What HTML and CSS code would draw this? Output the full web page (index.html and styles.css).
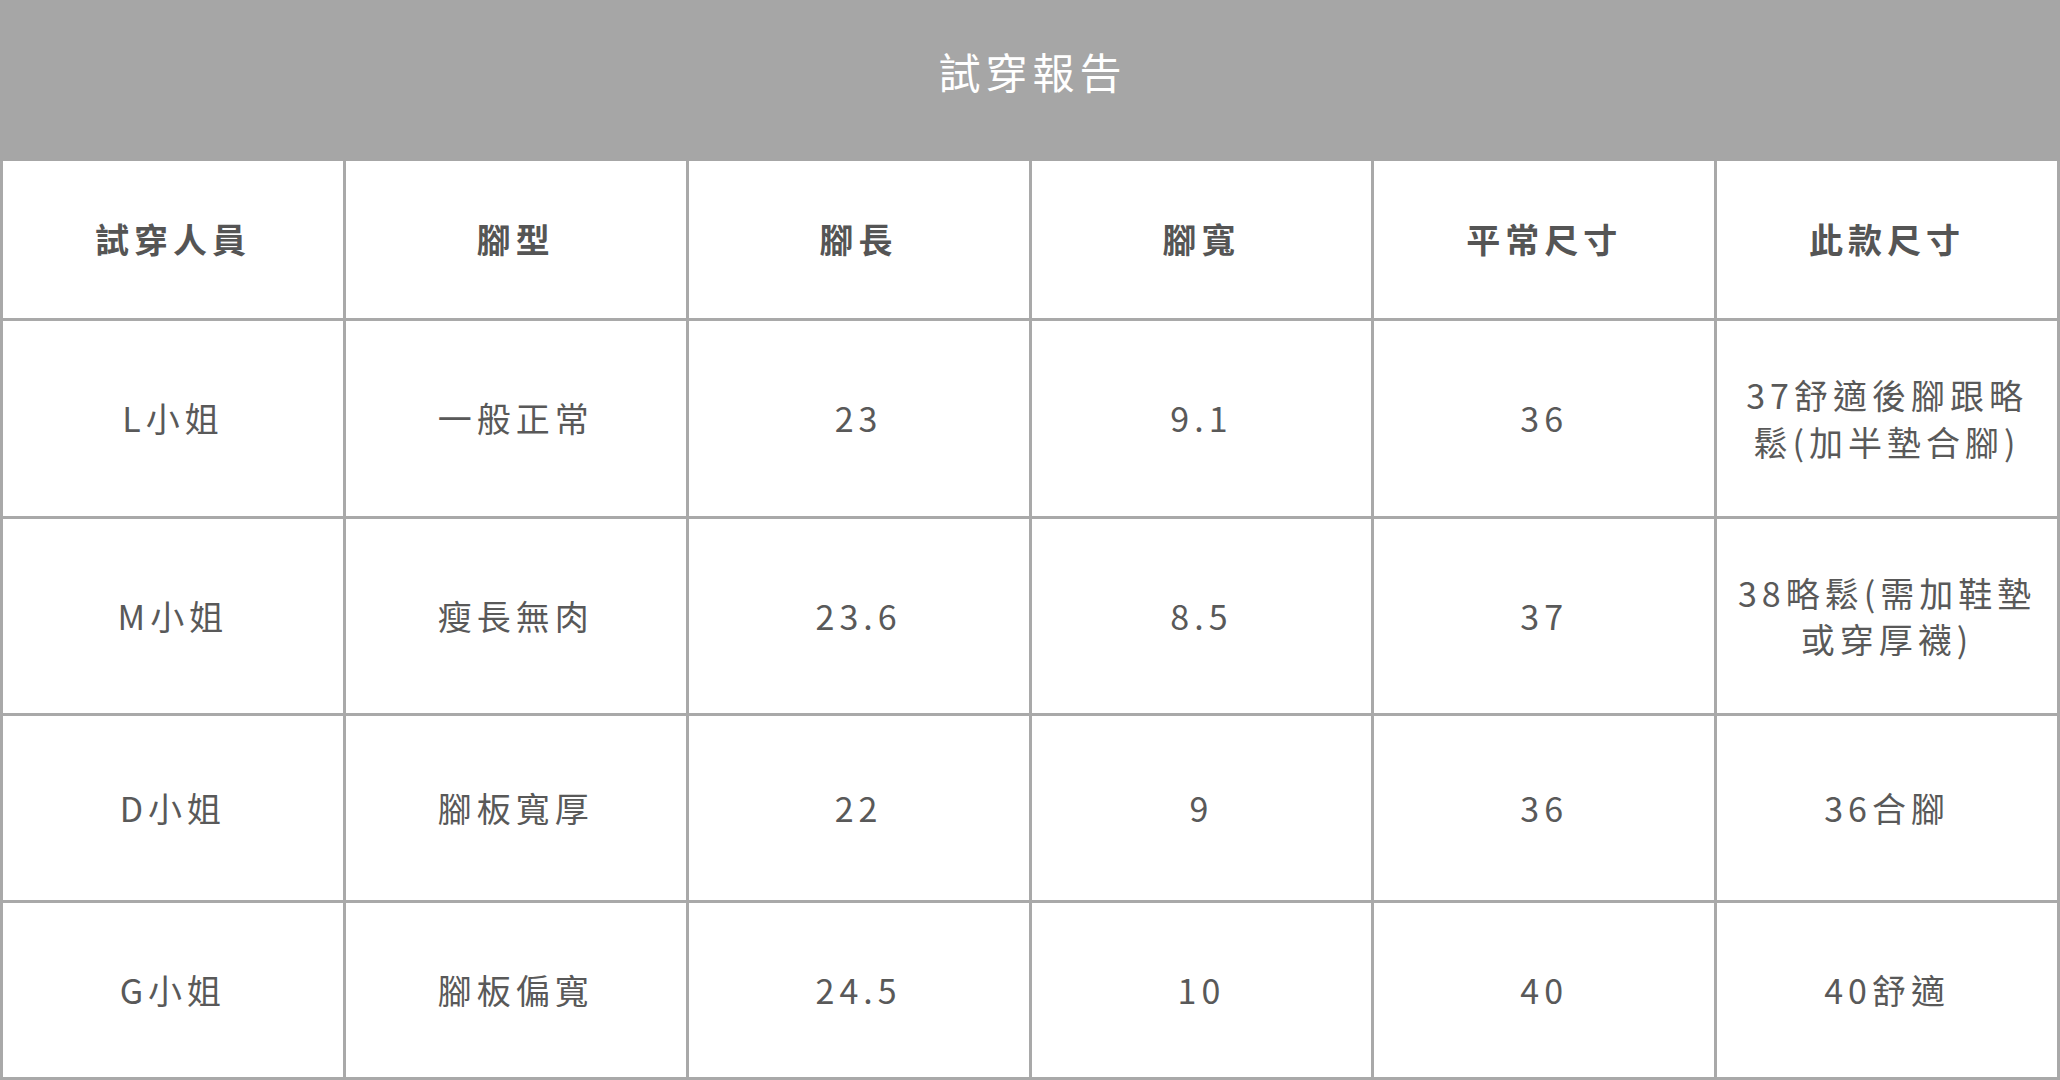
FILE: index.html
```html
<!DOCTYPE html>
<html lang="zh-Hant">
<head>
<meta charset="utf-8">
<title>試穿報告</title>
<link rel="stylesheet" href="styles.css">
</head>
<body>
<main class="report">
  <header class="report-title">試穿報告</header>
  <div class="report-grid">
    <div class="cell head">試穿人員</div>
    <div class="cell head">腳型</div>
    <div class="cell head">腳長</div>
    <div class="cell head">腳寬</div>
    <div class="cell head">平常尺寸</div>
    <div class="cell head">此款尺寸</div>

    <div class="cell">L小姐</div>
    <div class="cell">一般正常</div>
    <div class="cell">23</div>
    <div class="cell">9.1</div>
    <div class="cell">36</div>
    <div class="cell">37舒適後腳跟略鬆(加半墊合腳)</div>

    <div class="cell">M小姐</div>
    <div class="cell">瘦長無肉</div>
    <div class="cell">23.6</div>
    <div class="cell">8.5</div>
    <div class="cell">37</div>
    <div class="cell">38略鬆(需加鞋墊或穿厚襪)</div>

    <div class="cell">D小姐</div>
    <div class="cell">腳板寬厚</div>
    <div class="cell">22</div>
    <div class="cell">9</div>
    <div class="cell">36</div>
    <div class="cell">36合腳</div>

    <div class="cell">G小姐</div>
    <div class="cell">腳板偏寬</div>
    <div class="cell">24.5</div>
    <div class="cell">10</div>
    <div class="cell">40</div>
    <div class="cell">40舒適</div>
  </div>
</main>
</body>
</html>
```

FILE: styles.css
```css
html, body {
  margin: 0;
  padding: 0;
  background: #ffffff;
}

body {
  font-family: "Noto Sans CJK TC", "Noto Sans", sans-serif;
  color: #595959;
}

.report {
  width: 2060px;
  height: 1080px;
  display: flex;
  flex-direction: column;
}

.report-title {
  height: 161px;
  flex: 0 0 161px;
  background: #a6a6a6;
  color: #ffffff;
  display: flex;
  align-items: center;
  justify-content: center;
  font-size: 42px;
  letter-spacing: 5px;
  padding-left: 5px;
  box-sizing: border-box;
  padding-bottom: 20px;
}

.report-grid {
  flex: 1 1 auto;
  display: grid;
  grid-template-columns: repeat(6, 1fr);
  grid-template-rows: 157px 195px 194px 184px 174px;
  gap: 3px;
  padding: 0 3px 3px;
  background: #a9a9a9;
}

.cell {
  background: #ffffff;
  display: flex;
  align-items: center;
  justify-content: center;
  text-align: center;
  padding: 0 16px;
  font-size: 34px;
  line-height: 1.36;
  letter-spacing: 5px;
  color: #595959;
}

.cell.head {
  font-weight: 700;
  color: #555555;
}
```
